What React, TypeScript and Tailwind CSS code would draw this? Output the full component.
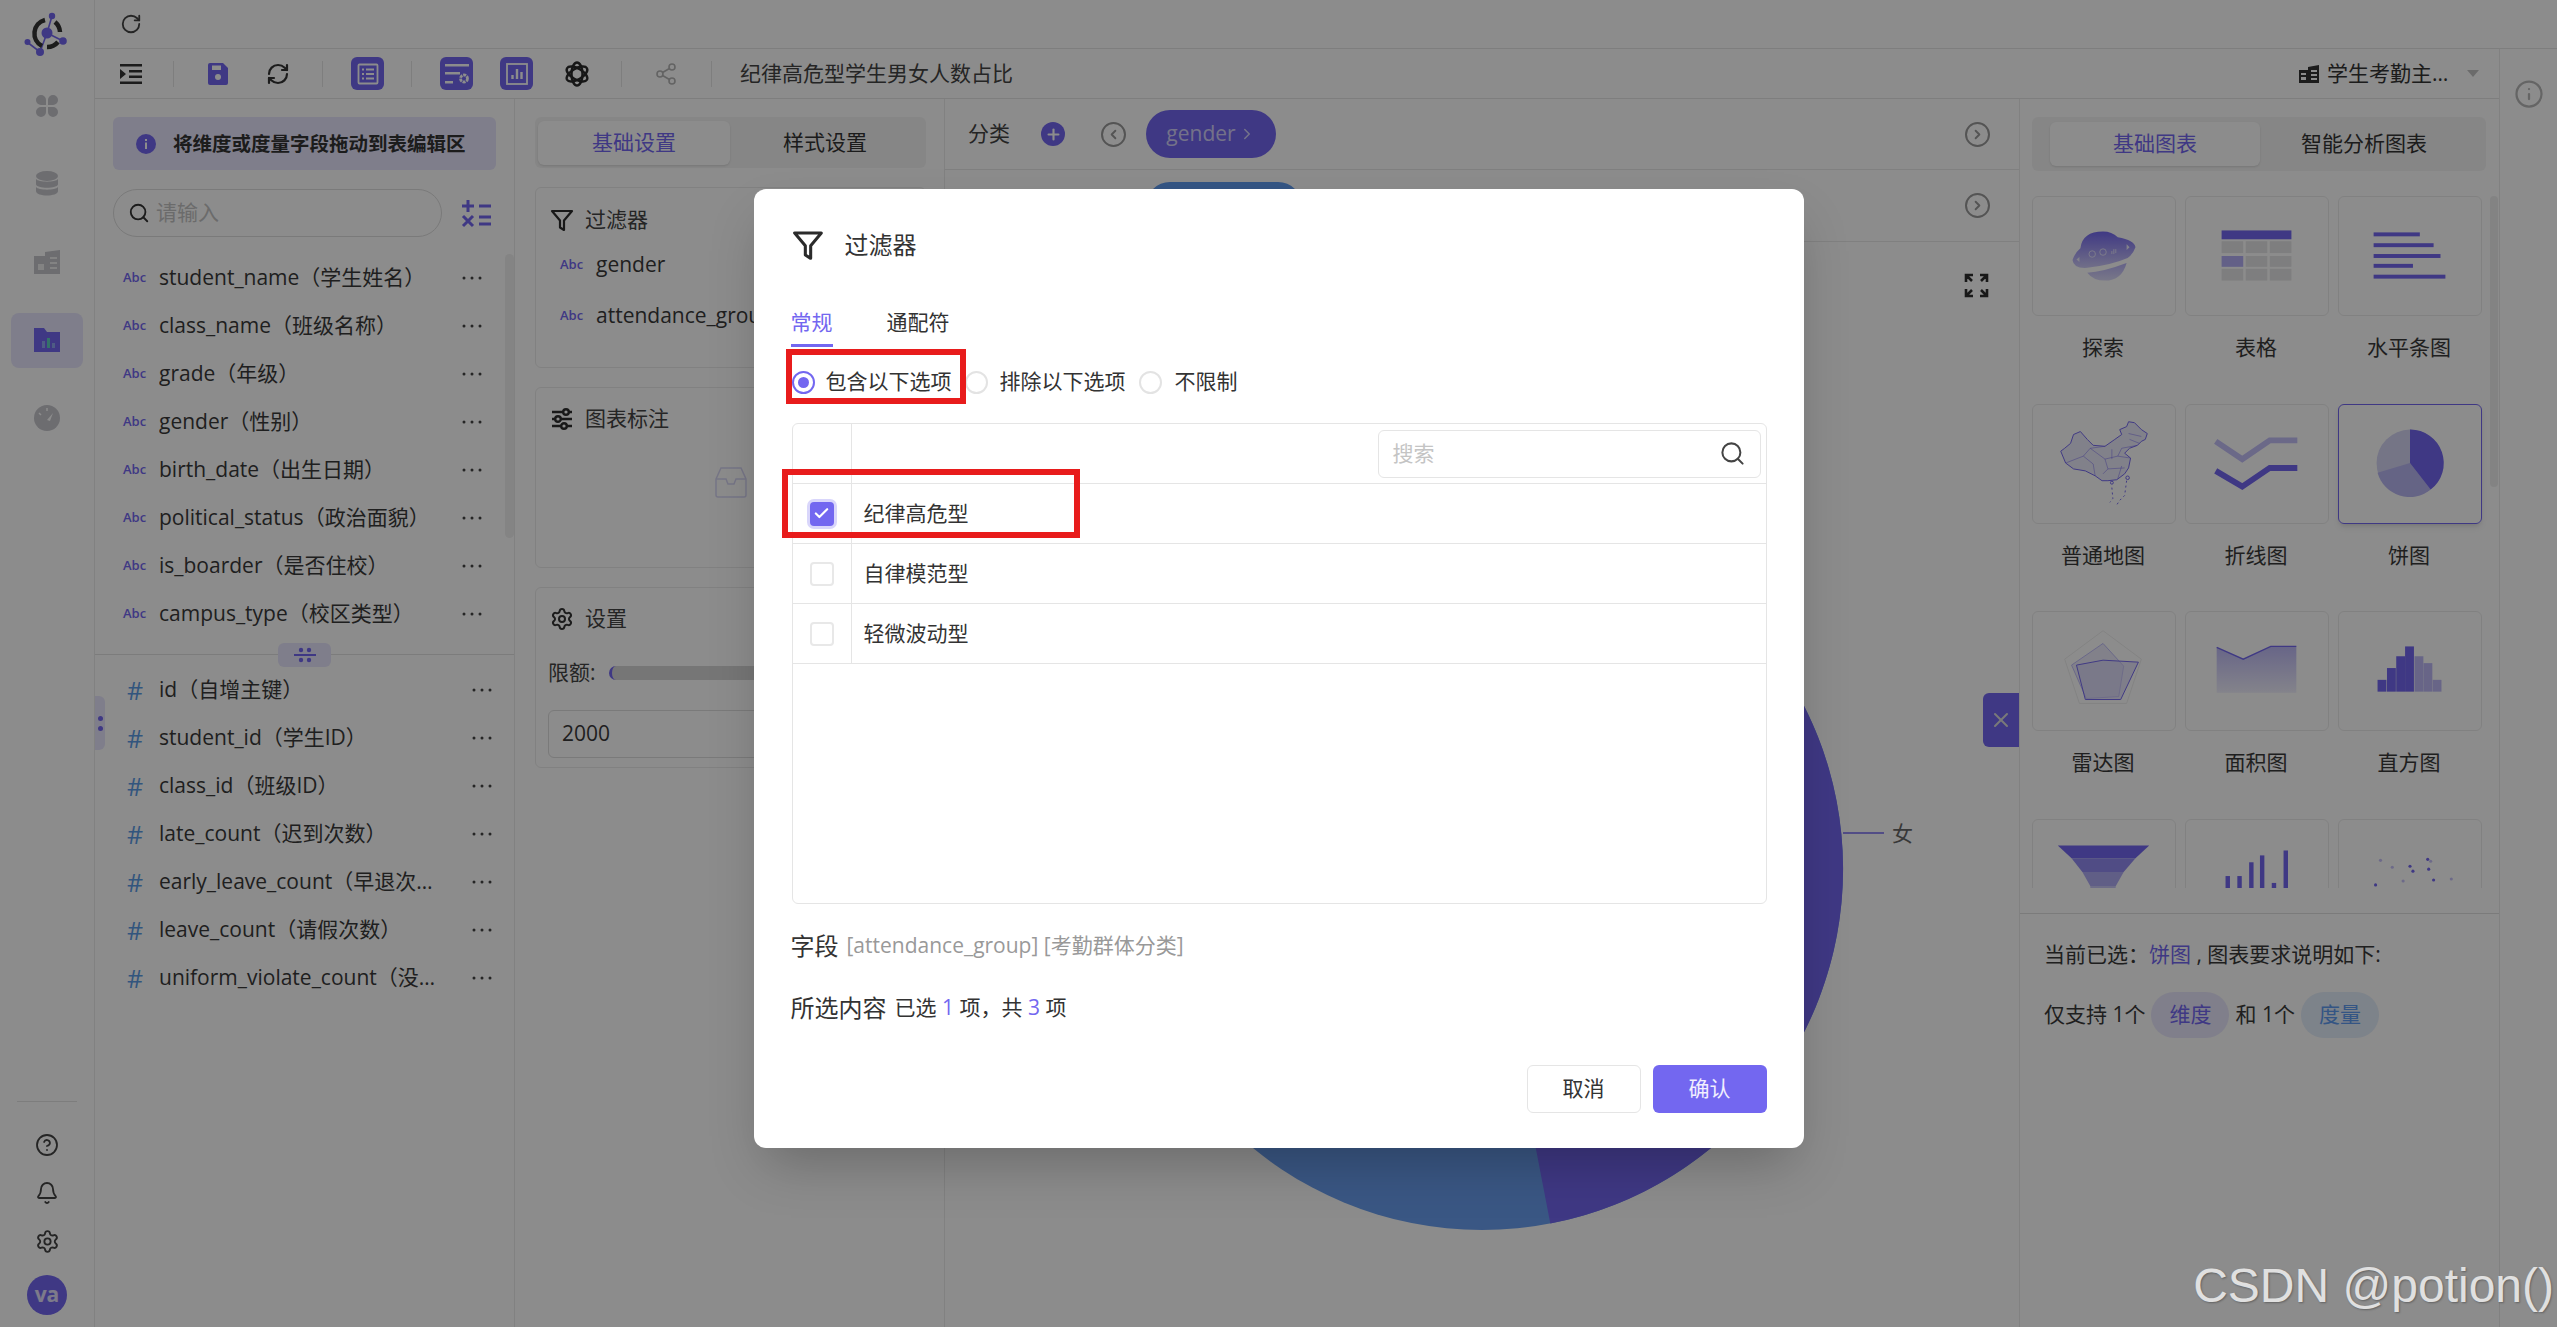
import { Bell, Check, ChevronLeft, ChevronRight, CircleHelp, Info, Plus, RefreshCw, RotateCw, Search, Settings, Share2, X } from 'lucide-react';

const dimensions = [
  'student_name（学生姓名）',
  'class_name（班级名称）',
  'grade（年级）',
  'gender（性别）',
  'birth_date（出生日期）',
  'political_status（政治面貌）',
  'is_boarder（是否住校）',
  'campus_type（校区类型）',
];

const measures = [
  'id（自增主键）',
  'student_id（学生ID）',
  'class_id（班级ID）',
  'late_count（迟到次数）',
  'early_leave_count（早退次数）',
  'leave_count（请假次数）',
  'uniform_violate_count（没穿校服次数）',
];

function Dots() {
  return (
    <svg width="20" height="4" viewBox="0 0 20 4" className="shrink-0" fill="#444">
      <circle cx="2" cy="2" r="1.5" />
      <circle cx="10" cy="2" r="1.5" />
      <circle cx="18" cy="2" r="1.5" />
    </svg>
  );
}

function FunnelIcon({ size = 24, weight = 2.2 }: { size?: number; weight?: number }) {
  return (
    <svg width={size} height={size} viewBox="0 0 24 24" fill="none" stroke="#2b2b2b" strokeWidth={weight} strokeLinejoin="round">
      <path d="M2 3h20l-8 9.500V22l-4-2.500v-7z" />
    </svg>
  );
}

function Abc() {
  return <span className="w-[36px] shrink-0 text-[13px] font-semibold text-[#7367f0]">Abc</span>;
}

function Logo() {
  return (
    <svg width="46" height="46" viewBox="0 0 46 46" fill="none">
      <path d="M23 23L28 6M23 23L39 31M23 23L16 42L3 32" stroke="#7367f0" strokeWidth="1.600" />
      <path d="M21 10A14 14 0 0 0 18 36" stroke="#333" strokeWidth="4.500" />
      <path d="M31 12A14 14 0 0 1 36 22" stroke="#333" strokeWidth="4.500" />
      <path d="M23 37A14 14 0 0 0 34 32" stroke="#333" strokeWidth="4.500" />
      <circle cx="23" cy="23" r="5.500" fill="#7367f0" />
      <circle cx="28" cy="6" r="3.200" fill="#7367f0" />
      <circle cx="3.500" cy="32" r="3" fill="#7367f0" />
      <circle cx="16" cy="42" r="4" fill="#7367f0" />
      <circle cx="39" cy="31" r="3.800" fill="#7367f0" />
    </svg>
  );
}

function Rail() {
  return (
    <div className="flex w-[95px] shrink-0 flex-col items-center border-r border-[#ececec]">
      <div className="flex h-[67px] w-full justify-center pt-[10px]">
        <Logo />
      </div>
      <div className="flex h-[78px] items-center">
        <svg width="24" height="24" viewBox="0 0 24 24" fill="#c6c6cc">
          <path d="M1 6a5 5 0 0 1 10 0v5H6a5 5 0 0 1-5-5zM13 6a5 5 0 0 1 10 0 5 5 0 0 1-5 5h-5zM1 18a5 5 0 0 1 5-5h5v5a5 5 0 0 1-10 0zM13 13h5a5 5 0 0 1 0 10 5 5 0 0 1-5-5z" />
        </svg>
      </div>
      <div className="flex h-[78px] items-center">
        <svg width="24" height="26" viewBox="0 0 24 26" fill="#c6c6cc">
          <ellipse cx="12" cy="5" rx="11" ry="5" />
          <path d="M1 8c2 3.500 20 3.500 22 0v5c0 5-22 5-22 0zM1 16c2 3.500 20 3.500 22 0v4c0 6-22 6-22 0z" />
        </svg>
      </div>
      <div className="flex h-[78px] items-center">
        <svg width="26" height="24" viewBox="0 0 26 24" fill="#c6c6cc">
          <path d="M0 6h11V2l15-2v24H0z" />
          <path d="M16 7h7v2h-7zM16 12h7v2h-7zM16 17h7v2h-7zM4 14h6v6H4z" fill="#eeeeee" />
        </svg>
      </div>
      <div className="flex h-[78px] w-full items-center justify-center">
        <div className="flex h-[55px] w-[72px] items-center justify-center rounded-lg bg-[#e8e6fd]">
          <svg width="26" height="24" viewBox="0 0 26 24">
            <path d="M0 0h10l3 4h13v20H0z" fill="#7367f0" />
            <path d="M8 13h3v7H8z" fill="#8fa8f0" />
            <path d="M13 10h3v10h-3z" fill="#5fd0c0" />
            <path d="M18 15h3v5h-3z" fill="#8fa8f0" />
          </svg>
        </div>
      </div>
      <div className="flex h-[78px] items-center">
        <svg width="26" height="26" viewBox="0 0 26 26">
          <circle cx="13" cy="13" r="13" fill="#c6c6cc" />
          <path d="M13 15l6-7-3 8z" fill="#ffffff" />
          <path d="M13 3v3M5 8l2 2" stroke="#ffffff" strokeWidth="1.500" />
        </svg>
      </div>
      <div className="mt-auto w-[60px] border-t border-[#e4e4e4]" />
      <div className="mt-[19px] flex h-[48px] items-center">
        <CircleHelp size={24} strokeWidth={1.8} color="#444" />
      </div>
      <div className="flex h-[48px] items-center">
        <Bell size={24} strokeWidth={1.8} color="#444" />
      </div>
      <div className="flex h-[48px] items-center">
        <Settings size={25} strokeWidth={1.8} color="#444" />
      </div>
      <div className="mb-[12px] mt-[10px] flex h-[40px] w-[40px] items-center justify-center rounded-full bg-[#7367f0] text-[21px] font-bold text-white/80">
        va
      </div>
    </div>
  );
}

function Toolbar() {
  const square = 'flex h-[33px] w-[33px] shrink-0 items-center justify-center rounded-md bg-[#7367f0]';
  const sep = 'h-[26px] w-px shrink-0 bg-[#e6e6e6]';
  return (
    <div className="flex h-[50px] shrink-0 items-center border-b border-[#e6e6e6]">
      <svg width="22" height="20" viewBox="0 0 22 20" className="ml-[25px] shrink-0" fill="#333">
        <path d="M0 0h22v2.500H0zM9 6h13v2.500H9zM9 11.500h13V14H9zM0 17.500h22V20H0zM0 5l6 5-6 5z" />
      </svg>
      <div className={`${sep} ml-[31px]`} />
      <svg width="20" height="22" viewBox="0 0 20 22" className="ml-[34px] shrink-0">
        <path d="M2 0h13l5 5v15a2 2 0 0 1-2 2H2a2 2 0 0 1-2-2V2a2 2 0 0 1 2-2z" fill="#7367f0" />
        <path d="M4 2.500h9V7H4z" fill="#ffffff" />
        <circle cx="10" cy="14" r="3" fill="#ffffff" />
      </svg>
      <RefreshCw size={24} strokeWidth={2.2} color="#333" className="ml-[38px] shrink-0" />
      <div className={`${sep} ml-[32px]`} />
      <div className={`${square} ml-[28px]`}>
        <svg width="22" height="22" viewBox="0 0 22 22" fill="none" stroke="#ffffff" strokeWidth="1.800">
          <rect x="1.500" y="1.500" width="19" height="19" rx="1" />
          <path d="M5 6.500h2M9 6.500h8M5 11h2M9 11h8M5 15.500h2M9 15.500h8" strokeWidth="2" />
        </svg>
      </div>
      <div className={`${sep} ml-[27px]`} />
      <div className={`${square} ml-[28px]`}>
        <svg width="26" height="24" viewBox="0 0 26 24" fill="#ffffff">
          <path d="M1 2h24v2.500H1zM1 10h15v2.500H1zM1 19h8v2.500H1z" />
          <circle cx="20" cy="16.500" r="3.500" fill="none" stroke="#ffffff" strokeWidth="2.800" strokeDasharray="3 0.800" />
        </svg>
      </div>
      <div className={`${square} ml-[27px]`}>
        <svg width="24" height="24" viewBox="0 0 24 24" fill="none" stroke="#ffffff" strokeWidth="1.800">
          <rect x="2" y="2" width="20" height="20" />
          <path d="M7.500 17v-4M12 17V7M16.500 17v-7" strokeWidth="2.400" />
        </svg>
      </div>
      <svg width="26" height="26" viewBox="0 0 26 26" className="ml-[31px] shrink-0" fill="none" stroke="#2a2a2a" strokeWidth="2.400">
        <ellipse cx="13" cy="13" rx="11.500" ry="5.500" transform="rotate(30 13 13)" />
        <ellipse cx="13" cy="13" rx="11.500" ry="5.500" transform="rotate(90 13 13)" />
        <ellipse cx="13" cy="13" rx="11.500" ry="5.500" transform="rotate(150 13 13)" />
      </svg>
      <div className={`${sep} ml-[31px]`} />
      <Share2 size={24} strokeWidth={1.6} color="#b5b5b5" className="ml-[32px] shrink-0" />
      <div className={`${sep} ml-[33px]`} />
      <span className="ml-[28px] text-[21px] text-[#444]">纪律高危型学生男女人数占比</span>
      <div className="ml-auto flex items-center">
        <svg width="20" height="18" viewBox="0 0 20 18" fill="#333">
          <path d="M0 5h9V2l11-2v18H0zM2 8v2h5V8zm0 4v3h5v-3zm10-7v2h6V5zm0 4v2h6V9zm0 4v2h6v-2z" fillRule="evenodd" />
        </svg>
        <span className="ml-[8px] w-[127px] truncate text-[21px] text-[#333]">学生考勤主题数据</span>
        <svg width="12" height="7" viewBox="0 0 12 7" className="ml-[13px] mr-[20px]" fill="#c4c4c4">
          <path d="M0 0h12L6 7z" />
        </svg>
      </div>
    </div>
  );
}

function FieldsColumn() {
  return (
    <div className="relative flex w-[420px] shrink-0 flex-col border-r border-[#ececec]">
      <div className="mx-[18px] mt-[18px] flex h-[53px] items-center rounded-md bg-[#e8e6fd] pl-[23px]">
        <svg width="20" height="20" viewBox="0 0 20 20">
          <circle cx="10" cy="10" r="10" fill="#7367f0" />
          <path d="M9 8.500h2V15H9zM9 5h2v2H9z" fill="#ffffff" />
        </svg>
        <span className="ml-[17px] text-[19.5px] font-bold text-[#333]">将维度或度量字段拖动到表编辑区</span>
      </div>
      <div className="ml-[18px] mt-[19px] flex items-center">
        <div className="flex h-[48px] w-[329px] items-center rounded-full border border-[#dedede] pl-[14px]">
          <Search size={22} strokeWidth={2} color="#333" />
          <span className="ml-[6px] text-[21px] text-[#c4c4c4]">请输入</span>
        </div>
        <svg width="30" height="30" viewBox="0 0 30 30" className="ml-[19px]" stroke="#7367f0" strokeWidth="3" fill="none">
          <path d="M1 8h12M7 2v12M18 8h12M2 18l10 10M12 18L2 28M18 19h12M18 26h12" />
        </svg>
      </div>
      <div className="mt-[17px] flex flex-col">
        {dimensions.map((name) => (
          <div key={name} className="flex h-[48px] items-center pl-[28px] pr-[32px]">
            <Abc />
            <span className="flex-1 truncate text-[21px] text-[#3a3a3a]">{name}</span>
            <Dots />
          </div>
        ))}
      </div>
      <div className="relative mt-[16px] border-t border-[#e2e2e2]">
        <div className="absolute left-[183px] top-[-12px] flex h-[24px] w-[53px] items-center justify-center rounded-md bg-[#e8e6fd]">
          <svg width="22" height="16" viewBox="0 0 22 16" fill="#7367f0">
            <circle cx="7" cy="3" r="2.200" />
            <circle cx="15" cy="3" r="2.200" />
            <rect x="0" y="7" width="22" height="2" />
            <circle cx="7" cy="13" r="2.200" />
            <circle cx="15" cy="13" r="2.200" />
          </svg>
        </div>
      </div>
      <div className="mt-[11px] flex flex-col">
        {measures.map((name) => (
          <div key={name} className="flex h-[48px] items-center pl-[32px] pr-[22px]">
            <span className="w-[32px] shrink-0 text-[25px] font-medium leading-none text-[#5c9ce6]">#</span>
            <span className="w-[283px] truncate text-[21px] text-[#3a3a3a]">{name}</span>
            <span className="flex-1" />
            <Dots />
          </div>
        ))}
      </div>
      <div className="absolute right-0 top-[155px] h-[284px] w-[9px] rounded-full bg-[#f0f0f0]" />
      <div className="absolute left-0 top-[597px] flex h-[54px] w-[10px] flex-col items-center justify-center gap-[5px] rounded-r-md bg-[#e8e6fd]">
        <div className="h-[5px] w-[5px] rounded-full bg-[#7367f0]" />
        <div className="h-[5px] w-[5px] rounded-full bg-[#7367f0]" />
      </div>
    </div>
  );
}

function SettingsColumn() {
  const card = 'rounded-md border border-[#ececec]';
  return (
    <div className="flex w-[430px] shrink-0 flex-col border-r border-[#ececec] px-[20px] pt-[18px]">
      <div className="flex h-[51px] w-[391px] shrink-0 items-center rounded-md bg-[#f5f5f5] pl-[3px]">
        <div className="flex h-[44px] w-[192px] items-center justify-center rounded-md bg-white text-[21px] text-[#7367f0] shadow-sm">基础设置</div>
        <div className="flex flex-1 items-center justify-center pr-[6px] text-[21px] text-[#333]">样式设置</div>
      </div>
      <div className={`${card} mt-[19px] h-[181px] w-[391px] shrink-0 pl-[14px] pt-[20px]`}>
        <div className="flex h-[24px] items-center">
          <FunnelIcon />
          <span className="ml-[11px] text-[21px] text-[#444]">过滤器</span>
        </div>
        <div className="ml-[10px] mt-[18px] flex h-[30px] items-center">
          <Abc />
          <span className="text-[21px] text-[#3a3a3a]">gender</span>
        </div>
        <div className="ml-[10px] mt-[21px] flex h-[30px] items-center">
          <Abc />
          <span className="text-[21px] text-[#3a3a3a]">attendance_group</span>
        </div>
      </div>
      <div className={`${card} mt-[19px] flex h-[181px] w-[391px] shrink-0 flex-col pl-[14px] pt-[19px]`}>
        <div className="flex h-[24px] items-center">
          <svg width="24" height="24" viewBox="0 0 24 24" fill="none" stroke="#2f2f2f" strokeWidth="2.400">
            <path d="M2 5h11M19 5h3M2 12h3M11 12h11M2 19h9M17 19h5" />
            <circle cx="16" cy="5" r="2.800" />
            <circle cx="8" cy="12" r="2.800" />
            <circle cx="14" cy="19" r="2.800" />
          </svg>
          <span className="ml-[11px] text-[21px] text-[#444]">图表标注</span>
        </div>
        <div className="mr-[14px] mt-[34px] flex justify-center">
          <svg width="38" height="36" viewBox="0 0 38 36" fill="none" stroke="#d8d6f5" strokeWidth="1.500">
            <path d="M4 14 L9 3h20l5 11v16a2 2 0 0 1-2 2H6a2 2 0 0 1-2-2z" />
            <path d="M4 14h10l2 5h6l2-5h10" />
          </svg>
        </div>
      </div>
      <div className={`${card} mt-[19px] h-[181px] w-[391px] shrink-0 pl-[12px] pr-[12px] pt-[19px]`}>
        <div className="ml-[2px] flex h-[24px] items-center">
          <Settings size={24} strokeWidth={2} color="#333" />
          <span className="ml-[11px] text-[21px] text-[#444]">设置</span>
        </div>
        <div className="mt-[27px] flex h-[30px] items-center">
          <span className="text-[21px] text-[#444]">限额:</span>
          <div className="ml-[13px] h-[14px] flex-1 rounded-full border-l-[3px] border-[#7367f0] bg-[#d8d8d8]" />
        </div>
        <div className="mt-[22px] flex h-[48px] items-center rounded-md border border-[#dedede] pl-[13px] text-[21px] text-[#3a3a3a]">2000</div>
      </div>
    </div>
  );
}

function CanvasColumn() {
  return (
    <div className="relative flex min-w-0 flex-1 flex-col">
      <div className="flex h-[71px] shrink-0 items-center border-b border-[#e9e9e9] pl-[23px] pr-[29px]">
        <span className="w-[44px] text-[21px] text-[#444]">分类</span>
        <div className="ml-[29px] flex h-[24px] w-[24px] items-center justify-center rounded-full bg-[#7367f0]">
          <Plus size={17} strokeWidth={3} color="#fff" />
        </div>
        <div className="ml-[36px] flex h-[25px] w-[25px] items-center justify-center rounded-full border-2 border-[#9a9a9a]">
          <ChevronLeft size={15} strokeWidth={3} color="#9a9a9a" />
        </div>
        <div className="ml-[20px] flex h-[48px] w-[130px] items-center justify-center rounded-full bg-[#7367f0] text-[21px] text-white/70">
          gender
          <ChevronRight size={18} strokeWidth={2} className="ml-[2px]" />
        </div>
        <div className="ml-auto flex h-[25px] w-[25px] items-center justify-center rounded-full border-2 border-[#9a9a9a]">
          <ChevronRight size={15} strokeWidth={3} color="#9a9a9a" />
        </div>
      </div>
      <div className="flex h-[72px] shrink-0 items-center border-b border-[#e9e9e9] pl-[23px] pr-[29px]">
        <span className="w-[44px] text-[21px] text-[#444]">数值</span>
        <div className="ml-[134px] flex h-[48px] w-[156px] items-center justify-center rounded-full bg-[#5f9bf0] text-[21px] text-white/70">count</div>
        <div className="ml-auto flex h-[25px] w-[25px] items-center justify-center rounded-full border-2 border-[#9a9a9a]">
          <ChevronRight size={15} strokeWidth={3} color="#9a9a9a" />
        </div>
      </div>
      <svg viewBox="0 0 1074 1085" className="block w-full">
        <circle cx="537" cy="627" r="361" fill="#6a9ff0" />
        <path d="M537 627 L537 266 A361 361 0 0 1 605.300 981.500 Z" fill="#7367f0" />
        <path d="M898 591 H939" stroke="#7367f0" strokeWidth="1.500" />
        <text x="947" y="599" fontSize="21" fill="#666">女</text>
      </svg>
      <svg width="25" height="25" viewBox="0 0 25 25" className="absolute right-[30px] top-[174px]" fill="none" stroke="#2f2f2f" strokeWidth="2.600">
        <path d="M2 9V2h7M2 2l6 6M16 2h7v7M23 2l-6 6M2 16v7h7M2 23l6-6M23 16v7h-7M23 23l-6-6" />
      </svg>
      <div className="absolute right-0 top-[594px] flex h-[54px] w-[36px] items-center justify-center rounded-l-md bg-[#7367f0]">
        <X size={24} strokeWidth={2} color="#ddd" />
      </div>
    </div>
  );
}

function Thumb({ children }: { children: React.ReactNode }) {
  return (
    <svg viewBox="0 0 144 120" className="h-full w-full">
      {children}
    </svg>
  );
}

const P = '#7367f0';

const charts: { label?: string; selected?: boolean; icon: React.ReactNode }[] = [
  {
    label: '探索',
    icon: (
      <Thumb>
        <defs>
          <linearGradient id="planet" x1="0" y1="0" x2="0" y2="1">
            <stop offset="0" stopColor={P} />
            <stop offset="1" stopColor="#cfcbf8" />
          </linearGradient>
          <linearGradient id="planetLow" x1="0" y1="0" x2="0" y2="1">
            <stop offset="0" stopColor="#b5b0f6" />
            <stop offset="1" stopColor="#dcdaf9" />
          </linearGradient>
        </defs>
        <path d="M55 77Q71 76 95 67Q90 85 73 85Q61 85 55 77z" fill="url(#planetLow)" />
        <path d="M40 64Q43 56 48 52Q50 35 71 35Q80 35 86 41Q103 44 104 51Q101 59 96 62Q80 69 55 72Q41 73 40 64z" fill="url(#planet)" />
        <path d="M47 61v5l-3-2.500zM95 48v6l3-3z" fill="#eeedfd" />
        <circle cx="60" cy="58" r="3.300" fill="none" stroke="#eeedfd" strokeWidth="0.800" />
        <circle cx="71" cy="56" r="3.300" fill="none" stroke="#eeedfd" strokeWidth="0.800" />
        <path d="M80 58v-3M82 58v-5M84 57v-4" stroke="#eeedfd" strokeWidth="0.800" />
      </Thumb>
    ),
  },
  {
    label: '表格',
    icon: (
      <Thumb>
        <rect x="36" y="34" width="71" height="9" fill={P} />
        {[45, 60, 73].map((y) => [36, 60.500, 85].map((x) => (
          <rect key={`${x}-${y}`} x={x} y={y} width="22" height={y === 60 ? 11 : 12} fill={x === 36 && y === 60 ? '#b5b0f6' : '#e6e6e8'} />
        )))}
      </Thumb>
    ),
  },
  {
    label: '水平条图',
    icon: (
      <Thumb>
        <rect x="35" y="36" width="47" height="4" fill={P} />
        <rect x="35" y="47" width="61" height="4" fill={P} />
        <rect x="35" y="58" width="68" height="4" fill={P} />
        <rect x="35" y="68" width="40" height="4" fill={P} />
        <rect x="35" y="79" width="73" height="4" fill={P} />
      </Thumb>
    ),
  },
  {
    label: '普通地图',
    icon: (
      <Thumb>
        <path d="M28 47L32 44L38 39L41 30L48 27L55 35L61 41L73 42L83 35L90 30L88 25L95 22L97 17L103 18L110 25L116 29L114 35L110 37L106 41L98 44L93 49L99 54L97 64L93 70L85 76L76 77L70 77L63 72L53 67L41 65L33 59Z" fill="#ecebfb" stroke={P} strokeWidth="1" strokeLinejoin="round" />
        <path d="M33 59L51 52L61 60L63 72M51 52L58 44L73 42M58 44L73 55L76 65L71 70M73 55L86 52L90 44L106 41M86 52L99 54M76 65L93 64M90 62L86 75M80 45L80 55M97 29L110 32M98 35L108 39" fill="none" stroke={P} strokeWidth="0.600" strokeOpacity="0.800" />
        <circle cx="80" cy="79" r="1.500" fill="none" stroke={P} strokeWidth="1" />
        <circle cx="96" cy="74" r="1.800" fill="none" stroke={P} strokeWidth="1" />
        <path d="M80 84L81 95L78 99M95 77L93 92L88 97L84 103" fill="none" stroke={P} strokeWidth="1" strokeDasharray="2 3" />
      </Thumb>
    ),
  },
  {
    label: '折线图',
    icon: (
      <Thumb>
        <path d="M30 37L57 55L85 36H113" fill="none" stroke="#c4bff8" strokeWidth="6" />
        <path d="M30 67L57 83L85 64H113" fill="none" stroke={P} strokeWidth="6" />
      </Thumb>
    ),
  },
  {
    label: '饼图',
    selected: true,
    icon: (
      <Thumb>
        <circle cx="72" cy="59" r="34" fill="#d5d5f5" />
        <path d="M72 59L39 69A34 34 0 0 0 93 86Z" fill="#b9b6f2" />
        <path d="M72 59V25A34 34 0 0 1 93 86Z" fill={P} />
      </Thumb>
    ),
  },
  {
    label: '雷达图',
    icon: (
      <Thumb>
        <path d="M71 19L110 48L95 93L47 93L32 48Z" fill="none" stroke="#eeeeee" strokeWidth="1" />
        <path d="M71 32L92 55L87 86L54 88L39 54Z" fill="#dcdaf9" fillOpacity="0.500" stroke="#a9a3f5" strokeWidth="0.700" />
        <path d="M44 54L71 49L107 51L89 89L53 89Z" fill="#cfcbf8" fillOpacity="0.500" stroke={P} strokeWidth="1" />
      </Thumb>
    ),
  },
  {
    label: '面积图',
    icon: (
      <Thumb>
        <defs>
          <linearGradient id="area" x1="0" y1="0" x2="0" y2="1">
            <stop offset="0" stopColor="#bdb9f6" />
            <stop offset="1" stopColor="#f0effd" />
          </linearGradient>
        </defs>
        <path d="M31 36L58 48L86 35H112V82H31Z" fill="url(#area)" />
        <path d="M31 36L58 48L86 35H112" fill="none" stroke={P} strokeWidth="1.400" />
      </Thumb>
    ),
  },
  {
    label: '直方图',
    icon: (
      <Thumb>
        {[
          [39, 69, P],
          [48.600, 57, P],
          [58, 45, P],
          [67, 35, P],
          [76.600, 45, '#bdb9f6'],
          [85.700, 52, '#bdb9f6'],
          [95, 69, '#bdb9f6'],
        ].map(([x, y, fill]) => (
          <rect key={String(x)} x={x as number} y={y as number} width="9" height={81 - (y as number)} fill={fill as string} />
        ))}
      </Thumb>
    ),
  },
  {
    icon: (
      <Thumb>
        <path d="M25 26H118L104 39H39Z" fill={P} />
        <path d="M39 39H104L92 53H50Z" fill="#928af2" />
        <path d="M50 53H92L84 67H58Z" fill="#b0abf5" />
        <path d="M58 67H84L80 120H62Z" fill="#c9c6f8" />
      </Thumb>
    ),
  },
  {
    icon: (
      <Thumb>
        {[
          [40, 57],
          [52, 57],
          [64, 43],
          [75, 36],
          [87, 64],
          [99, 31],
        ].map(([x, y]) => (
          <rect key={x} x={x} y={y} width="4.500" height={120 - y} fill={P} />
        ))}
      </Thumb>
    ),
  },
  {
    icon: (
      <Thumb>
        {[
          [42, 41, 0.4],
          [54, 48, 0.4],
          [72, 47, 1],
          [75, 52, 1],
          [90, 40, 1],
          [93, 42, 0.4],
          [91, 50, 1],
          [96, 61, 1],
          [114, 60, 0.4],
          [65, 62, 0.4],
          [37, 66, 1],
        ].map(([x, y, o]) => (
          <circle key={x} cx={x} cy={y} r="1.600" fill={P} fillOpacity={o} />
        ))}
      </Thumb>
    ),
  },
];

function ChartPanel() {
  return (
    <div className="relative flex w-[480px] shrink-0 flex-col border-l border-[#ececec]">
      <div className="ml-[12px] mr-[13px] mt-[18px] flex h-[54px] items-center rounded-md bg-[#f5f5f5] pl-[18px]">
        <div className="flex h-[44px] w-[210px] items-center justify-center rounded-md bg-white text-[21px] text-[#7367f0] shadow-sm">基础图表</div>
        <div className="flex flex-1 items-center justify-center pr-[18px] text-[21px] text-[#333]">智能分析图表</div>
      </div>
      <div className="ml-[12px] mt-[25px] grid h-[692px] grid-cols-[144px_144px_144px] gap-x-[9px] auto-rows-[207.5px] overflow-hidden">
        {charts.map((c, i) => (
          <div key={i} className="flex flex-col">
            <div className={`h-[120px] shrink-0 rounded-md border ${c.selected ? 'border-[#7367f0] shadow-md' : 'border-[#ececec]'}`}>{c.icon}</div>
            {c.label && <div className="mt-[17px] flex h-[30px] items-center justify-center pr-[2px] text-[21px] text-[#3a3a3a]">{c.label}</div>}
          </div>
        ))}
      </div>
      <div className="absolute right-[1px] top-[97px] h-[291px] w-[8px] rounded-full bg-[#efefef]" />
      <div className="mt-[25px] flex flex-col border-t border-[#e0e0e0] pl-[24px] pt-[26px] text-[21px] text-[#3a3a3a]">
        <div className="flex h-[30px] items-center">
          当前已选：<span className="text-[#7367f0]">饼图</span>&nbsp;, 图表要求说明如下:
        </div>
        <div className="mt-[22px] flex h-[46px] items-center">
          仅支持 1个
          <span className="mx-[6px] flex h-[46px] w-[78px] items-center justify-center rounded-full bg-[#eae8fd] text-[#7367f0]">维度</span>
          和 1个
          <span className="ml-[6px] flex h-[46px] w-[78px] items-center justify-center rounded-full bg-[#e4eefb] text-[#5f9bf0]">度量</span>
        </div>
      </div>
    </div>
  );
}

function Radio({ checked }: { checked?: boolean }) {
  return (
    <span className={`flex h-[23px] w-[23px] shrink-0 items-center justify-center rounded-full border-2 ${checked ? 'border-[#7367f0]' : 'border-[#e3e3e3]'}`}>
      {checked && <span className="h-[11px] w-[11px] rounded-full bg-[#7367f0]" />}
    </span>
  );
}

function FilterRow({ label, checked }: { label: string; checked?: boolean }) {
  return (
    <div className="flex h-[60px] shrink-0 border-b border-[#e5e5e5]">
      <div className="flex w-[59px] shrink-0 items-center justify-center border-r border-[#e5e5e5]">
        {checked ? (
          <span className="flex h-[24px] w-[24px] items-center justify-center rounded-[4px] bg-[#7367f0] ring-[3px] ring-[#d9d6fb]">
            <Check size={17} strokeWidth={3} color="#fff" />
          </span>
        ) : (
          <span className="h-[24px] w-[24px] rounded-[4px] border-2 border-[#e8e8e8]" />
        )}
      </div>
      <div className="flex items-center pl-[12px] text-[21px] text-[#333]">{label}</div>
    </div>
  );
}

function FilterDialog() {
  return (
    <div className="absolute inset-0 flex items-start justify-center bg-black/45 pt-[189px]">
      <div className="relative h-[959px] w-[1050px] rounded-[12px] bg-white pl-[37px] pr-[37px] pt-[38px] shadow-2xl">
        <div className="flex h-[36px] items-center">
          <span className="ml-[1px]">
            <FunnelIcon size={32} weight={2.300} />
          </span>
          <span className="ml-[21px] text-[24px] text-[#333]">过滤器</span>
        </div>
        <div className="mt-[43px] flex h-[41px] items-start text-[21px] leading-[32px]">
          <span className="h-[41px] border-b-[3px] border-[#7367f0] text-[#7367f0]">常规</span>
          <span className="ml-[54px] text-[#333]">通配符</span>
        </div>
        <div className="ml-px mt-[20px] flex h-[30px] items-center text-[21px] text-[#333]">
          <Radio checked />
          <span className="ml-[11px]">包含以下选项</span>
          <span className="ml-[13px]"><Radio /></span>
          <span className="ml-[12px]">排除以下选项</span>
          <span className="ml-[13px]"><Radio /></span>
          <span className="ml-[13px]">不限制</span>
        </div>
        <div className="ml-px mt-[26px] flex h-[481px] flex-col rounded-md border border-[#e5e5e5]">
          <div className="flex h-[60px] shrink-0 border-b border-[#e5e5e5]">
            <div className="w-[59px] shrink-0 border-r border-[#e5e5e5]" />
            <div className="flex flex-1 items-center justify-end pr-[5px]">
              <div className="flex h-[48px] w-[383px] items-center justify-between rounded-md border border-[#e5e5e5] pl-[14px] pr-[14px] text-[21px] text-[#c4c4c4]">
                搜索
                <Search size={27} strokeWidth={1.8} color="#444" />
              </div>
            </div>
          </div>
          <FilterRow label="纪律高危型" checked />
          <FilterRow label="自律模范型" />
          <FilterRow label="轻微波动型" />
        </div>
        <div className="mt-[24px] flex h-[36px] items-center">
          <span className="text-[24px] text-[#333]">字段</span>
          <span className="ml-[8px] text-[21px] text-[#999]">[attendance_group] [考勤群体分类]</span>
        </div>
        <div className="mt-[26px] flex h-[36px] items-center">
          <span className="text-[24px] text-[#333]">所选内容</span>
          <span className="ml-[8px] text-[21px] text-[#333]">
            已选 <span className="text-[#7367f0]">1</span> 项，共 <span className="text-[#7367f0]">3</span> 项
          </span>
        </div>
        <div className="mt-[39px] flex justify-end gap-[12px]">
          <button className="h-[48px] w-[114px] rounded-md border border-[#e5e5e5] bg-white text-[21px] text-[#333]">取消</button>
          <button className="h-[48px] w-[114px] rounded-md bg-[#7367f0] text-[21px] text-white/90">确认</button>
        </div>
        <div className="absolute left-[32px] top-[160px] h-[55px] w-[180px] border-[6px] border-[#e81c1c]" />
        <div className="absolute left-[28px] top-[280px] h-[69px] w-[298px] border-[6px] border-[#e81c1c]" />
      </div>
    </div>
  );
}

export default function App() {
  return (
    <div className="relative flex h-[1327px] w-[2557px] overflow-hidden bg-white [font-family:'Open_Sans','Noto_Sans_CJK_SC',sans-serif]">
      <Rail />
      <div className="flex min-w-0 flex-1 flex-col">
        <div className="flex h-[49px] shrink-0 items-center border-b border-[#e6e6e6] pl-[25px]">
          <RotateCw size={22} strokeWidth={2} color="#444" />
        </div>
        <div className="flex min-h-0 flex-1">
          <div className="flex min-w-0 flex-1 flex-col">
            <Toolbar />
            <div className="flex min-h-0 flex-1">
              <FieldsColumn />
              <SettingsColumn />
              <CanvasColumn />
              <ChartPanel />
            </div>
          </div>
          <div className="flex w-[58px] shrink-0 justify-center border-l border-[#ececec] pt-[30px]">
            <Info size={30} strokeWidth={1.8} color="#b8b8b8" />
          </div>
        </div>
      </div>
      <FilterDialog />
      <div className="absolute right-[3px] top-[1258px] text-[48px] leading-[56px] text-[#e0e0e0] [font-family:'Liberation_Sans',sans-serif] [text-shadow:1px_1px_2px_rgba(0,0,0,0.3)]">
        CSDN @potion()
      </div>
    </div>
  );
}
